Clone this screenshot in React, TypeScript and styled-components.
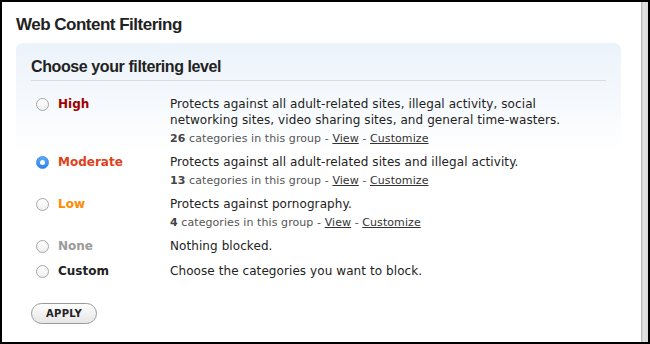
import styled, { createGlobalStyle } from "styled-components";

const GlobalStyle = createGlobalStyle`
  html, body {
    margin: 0;
    padding: 0;
    background: #fff;
  }
`;

const Frame = styled.div`
  width: 650px;
  height: 344px;
  box-sizing: border-box;
  border: 2px solid #000;
  display: flex;
  overflow: hidden;
  background: #fff;
`;

const Main = styled.div`
  flex: 1;
  padding: 12px 20px 0 14px;
`;

const ScrollTrack = styled.div`
  width: 7px;
  background: linear-gradient(to right, #bdbdbd 0, #bdbdbd 1px, #e4e4e4 2px, #dadada 100%);
`;

const Title = styled.h1`
  margin: 0;
  font-family: "Liberation Sans", Arial, sans-serif;
  font-size: 17px;
  line-height: 22px;
  font-weight: bold;
  letter-spacing: -0.5px;
  color: #222;
`;

const Panel = styled.div`
  margin-top: 7px;
  padding: 14px 15px 20px;
  border-radius: 7px 7px 0 0;
  background: linear-gradient(to bottom, #ebf3fb 0, #f4f8fc 50px, #fff 110px);
`;

const PanelHeading = styled.h2`
  margin: 0;
  padding-bottom: 4px;
  border-bottom: 1px solid #dcdcdc;
  font-family: "Liberation Sans", Arial, sans-serif;
  font-size: 16px;
  line-height: 19px;
  font-weight: bold;
  letter-spacing: -0.4px;
  color: #222;
`;

const OptionList = styled.div`
  display: flex;
  flex-direction: column;
  gap: 7px;
  margin-top: 15px;
  padding-left: 5px;
`;

const OptionRow = styled.label`
  display: grid;
  grid-template-columns: 22px 112px 1fr;
  align-items: start;
  min-height: 18px;
  font-family: "DejaVu Sans", Verdana, sans-serif;
`;

const Radio = styled.span<{ $checked?: boolean }>`
  box-sizing: border-box;
  width: 13px;
  height: 13px;
  margin-top: 2px;
  border-radius: 50%;
  display: flex;
  align-items: center;
  justify-content: center;
  border: 1px solid ${(p) => (p.$checked ? "#3a8ee8" : "#a6a6a6")};
  background: ${(p) =>
    p.$checked
      ? "linear-gradient(#5aa8f8, #2f86ea)"
      : "linear-gradient(#ffffff, #f0f0f0)"};

  &::after {
    content: "";
    display: ${(p) => (p.$checked ? "block" : "none")};
    width: 5px;
    height: 5px;
    border-radius: 50%;
    background: #fff;
  }
`;

const tones: Record<string, string> = {
  high: "#a00000",
  moderate: "#e0401a",
  low: "#ff8a00",
  none: "#9a9a9a",
  custom: "#222",
};

const LevelName = styled.span<{ $tone: string }>`
  font-size: 12px;
  line-height: 16px;
  font-weight: bold;
  color: ${(p) => tones[p.$tone]};
`;

const Details = styled.div`
  display: flex;
  flex-direction: column;
  max-width: 395px;
`;

const Description = styled.div`
  font-size: 12px;
  line-height: 16px;
  letter-spacing: 0.08px;
  color: #222;
`;

const Meta = styled.div`
  margin-top: 2px;
  font-size: 11px;
  line-height: 17px;
  letter-spacing: 0.08px;
  color: #555;

  b {
    color: #444;
  }
`;

const MetaLink = styled.a`
  color: #333;
  text-decoration: underline;
  cursor: pointer;
`;

const ApplyButton = styled.button`
  margin-top: 22px;
  width: 66px;
  height: 21px;
  border-radius: 11px;
  border: 1px solid #9a9a9a;
  background: linear-gradient(#ffffff, #e6e6e6);
  font-family: "DejaVu Sans", Verdana, sans-serif;
  font-size: 10px;
  font-weight: bold;
  letter-spacing: 0.3px;
  color: #222;
  padding: 0;
  cursor: pointer;
`;

const levels = [
  {
    tone: "high",
    name: "High",
    text: "Protects against all adult-related sites, illegal activity, social networking sites, video sharing sites, and general time-wasters.",
    count: 26,
  },
  {
    tone: "moderate",
    name: "Moderate",
    text: "Protects against all adult-related sites and illegal activity.",
    count: 13,
    checked: true,
  },
  {
    tone: "low",
    name: "Low",
    text: "Protects against pornography.",
    count: 4,
  },
  { tone: "none", name: "None", text: "Nothing blocked." },
  { tone: "custom", name: "Custom", text: "Choose the categories you want to block." },
];

export default function App() {
  return (
    <>
      <GlobalStyle />
      <Frame>
        <Main>
          <Title>Web Content Filtering</Title>
          <Panel>
            <PanelHeading>Choose your filtering level</PanelHeading>
            <OptionList>
              {levels.map((level) => (
                <OptionRow key={level.tone}>
                  <Radio $checked={level.checked} />
                  <LevelName $tone={level.tone}>{level.name}</LevelName>
                  <Details>
                    <Description>{level.text}</Description>
                    {level.count !== undefined && (
                      <Meta>
                        <b>{level.count}</b> categories in this group -{" "}
                        <MetaLink>View</MetaLink> - <MetaLink>Customize</MetaLink>
                      </Meta>
                    )}
                  </Details>
                </OptionRow>
              ))}
            </OptionList>
            <ApplyButton>APPLY</ApplyButton>
          </Panel>
        </Main>
        <ScrollTrack />
      </Frame>
    </>
  );
}
